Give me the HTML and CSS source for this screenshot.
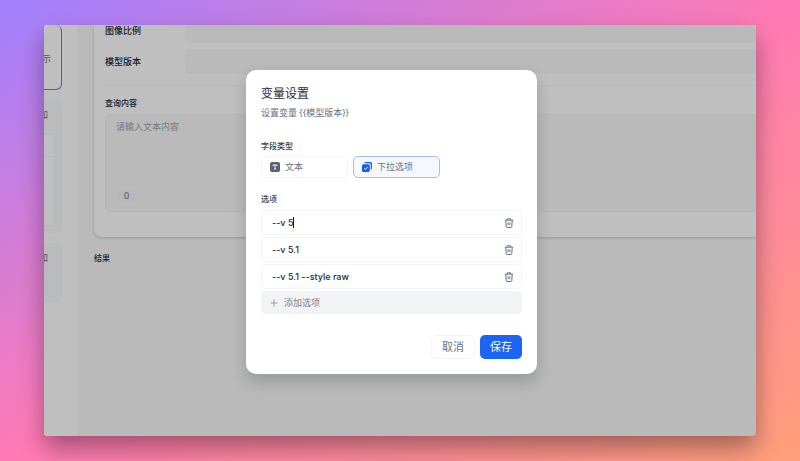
FILE: index.html
```html
<!DOCTYPE html>
<html lang="zh-CN">
<head>
    <meta charset="UTF-8">
    <meta name="viewport" content="width=device-width, initial-scale=1.0">
    <title>变量设置</title>
    <link rel="stylesheet" href="styles.css">
</head>
<body>
    <div class="window">
        <aside class="sidebar">
            <div class="side-card active"><span>示</span></div>
            <div class="side-card variables">
                <span>加</span>
                <div class="side-table">
                    <div class="side-head"></div>
                </div>
            </div>
            <div class="side-card context"><span>加</span></div>
        </aside>

        <main class="main">
            <section class="card">
                <div class="row">
                    <label for="ratio">图像比例</label>
                    <input type="text" id="ratio" class="row-input">
                </div>
                <div class="row">
                    <label for="version">模型版本</label>
                    <input type="text" id="version" class="row-input">
                </div>
                <div class="query">
                    <label for="query">查询内容</label>
                    <div class="query-box">
                        <textarea id="query" placeholder="请输入文本内容"></textarea>
                        <span class="count">0</span>
                    </div>
                </div>
            </section>
            <h2 class="result">结果</h2>
        </main>

        <div class="overlay">
            <form class="modal" role="dialog" aria-labelledby="modalTitle">
                <h1 id="modalTitle">变量设置</h1>
                <p class="desc">设置变量 {{模型版本}}</p>

                <h3>字段类型</h3>
                <div class="types">
                    <button type="button" class="type">
                        <svg width="10" height="10" viewBox="0 0 10 10">
                            <rect width="10" height="10" rx="2" fill="#596275"/>
                            <path d="M3 4V3h4v1M5 3v4M4 7h2" fill="none" stroke="#fff" stroke-width=".9"/>
                        </svg>
                        文本
                    </button>
                    <button type="button" class="type selected">
                        <svg width="10" height="10" viewBox="0 0 10 10">
                            <path d="M3.8 0h4.600A1.600 1.600 0 0 1 10 1.600v4.600a1.600 1.600 0 0 1-1.200 1.500V3.200A2 2 0 0 0 6.800 1.200H2.300A1.600 1.600 0 0 1 3.800 0z" fill="#155eef"/>
                            <rect y="2.200" width="7.800" height="7.800" rx="1.600" fill="#155eef"/>
                            <path d="M2.200 6.200l1.300 1.300 2.300-2.700" fill="none" stroke="#fff" stroke-width=".9"/>
                        </svg>
                        下拉选项
                    </button>
                </div>

                <h3>选项</h3>
                <div class="options">
                    <div class="option">
                        <input type="text" value="--v 5" aria-label="选项 1">
                        <span class="caret"></span>
                        <button type="button" class="delete" aria-label="删除">
                            <svg width="10" height="10" viewBox="0 0 10 10"><path d="M.8 2.200h8.400M3.300 2V.800h3.400V2M1.800 2.400l.4 6.200q.1.900.9.900h3.800q.8 0 .9-.9l.4-6.200M4.100 4.300v2.900M5.900 4.300v2.900"/></svg>
                        </button>
                    </div>
                    <div class="option">
                        <input type="text" value="--v 5.1" aria-label="选项 2">
                        <button type="button" class="delete" aria-label="删除">
                            <svg width="10" height="10" viewBox="0 0 10 10"><path d="M.8 2.200h8.400M3.300 2V.800h3.400V2M1.800 2.400l.4 6.200q.1.900.9.900h3.800q.8 0 .9-.9l.4-6.200M4.100 4.300v2.900M5.900 4.300v2.900"/></svg>
                        </button>
                    </div>
                    <div class="option">
                        <input type="text" value="--v 5.1 --style raw" aria-label="选项 3">
                        <button type="button" class="delete" aria-label="删除">
                            <svg width="10" height="10" viewBox="0 0 10 10"><path d="M.8 2.200h8.400M3.300 2V.800h3.400V2M1.800 2.400l.4 6.200q.1.900.9.900h3.800q.8 0 .9-.9l.4-6.200M4.100 4.300v2.900M5.900 4.300v2.900"/></svg>
                        </button>
                    </div>
                    <button type="button" class="add">
                        <svg width="8" height="8" viewBox="0 0 8 8"><path d="M4 .5v7M.5 4h7"/></svg>
                        添加选项
                    </button>
                </div>

                <div class="actions">
                    <button type="button" class="cancel">取消</button>
                    <button type="submit" class="save">保存</button>
                </div>
            </form>
        </div>
    </div>
</body>
</html>
```

FILE: styles.css
```css
* {
    box-sizing: border-box;
}

body {
    margin: 0;
    min-height: 100vh;
    padding: 25px 44px;
    display: flex;
    overflow-x: hidden;
    font-family: "Noto Sans", "Noto Sans CJK SC", sans-serif;
    font-size: 9px;
    line-height: 12px;
    color: #1f2a37;
    background: linear-gradient(to bottom right, #a080ff, #ff7ab5 50%, #ffa07a);
}

h1, h2, h3, p {
    margin: 0;
}

button, input, textarea {
    font: inherit;
    color: inherit;
    margin: 0;
    border: none;
    outline: none;
}

button {
    cursor: pointer;
}

.window {
    position: relative;
    flex: 1;
    display: flex;
    overflow: hidden;
    border-radius: 4px;
    background: #f9f9f9;
    box-shadow: 0 12px 24px rgba(0, 0, 0, 0.36);
}

/* sidebar */
.sidebar {
    width: 34px;
    padding-right: 15px;
    background: #fff;
    border-right: 1px solid #f9f9fa;
}

.side-card {
    overflow: hidden;
    margin-bottom: 10px;
    background: #f9fafb;
    border-radius: 0 6px 6px 0;
    color: #6b7280;
}

.side-card span {
    display: flex;
    justify-content: flex-end;
    width: 4px;
}

.side-card.active {
    height: 65px;
    padding-top: 28px;
    background: #fff;
    border: 1px solid #7477e0;
    border-top: none;
    border-left: none;
}

.side-card.active span {
    width: 7px;
}

.variables {
    height: 133px;
    padding-top: 9px;
}

.side-table {
    height: 92px;
    margin: 13px 7px 0 0;
    background: #fff;
    border: 1px solid #f3f4f6;
    border-left: none;
    border-radius: 0 4px 4px 0;
}

.side-head {
    height: 22px;
    border-bottom: 1px solid #f3f4f6;
}

.context {
    height: 59px;
    padding-top: 9px;
}

/* main area */
.main {
    flex: 1;
    min-width: 0;
    padding-left: 16px;
}

.card {
    height: 212px;
    padding-left: 11px;
    background: #fff;
    border-radius: 0 0 0 7px;
    box-shadow: 0 1px 3px rgba(16, 24, 40, 0.2);
}

.row {
    display: flex;
    align-items: center;
    height: 25px;
    margin-bottom: 6px;
}

.row:first-child {
    height: 18px;
}

.row label {
    width: 80px;
    font-weight: 500;
}

.row:first-child label {
    padding-bottom: 7px;
}

.row-input {
    flex: 1;
    height: 100%;
    background: #f9f9f9;
    border-radius: 5px 0 0 5px;
}

.row:first-child .row-input {
    border-top-left-radius: 0;
}

.query {
    margin-top: 11px;
    padding-top: 11px;
    border-top: 1px solid #f9f9f9;
}

.query label {
    display: block;
    margin-bottom: 5px;
    font-size: 8px;
    font-weight: 500;
}

.query-box {
    display: flex;
    flex-direction: column;
    align-items: flex-start;
    height: 98px;
    padding: 6px 10px 9px;
    background: #f9f9f9;
    border: 1px solid #f3f3f3;
    border-right: none;
    border-radius: 5px 0 0 5px;
}

textarea {
    flex: 1;
    width: 100%;
    padding: 0;
    resize: none;
    background: none;
}

textarea::placeholder {
    color: #9ca3af;
    opacity: 1;
}

.count {
    margin-left: 2px;
    padding: 0 6px;
    background: #f3f4f6;
    border-radius: 3px;
    color: #6b7280;
}

.result {
    margin-top: 15px;
    font-size: 8px;
    font-weight: 500;
}

/* dialog */
.overlay {
    position: absolute;
    inset: 0;
    display: flex;
    align-items: center;
    justify-content: center;
    padding: 0 17px 17px 0;
    background: rgba(0, 0, 0, 0.25);
}

.modal {
    width: 291px;
    padding: 15px;
    background: #fff;
    border-radius: 10px;
    box-shadow: 0 8px 16px rgba(16, 24, 40, 0.2);
}

.modal h1 {
    font-size: 12px;
    line-height: 18px;
    font-weight: 400;
}

.desc {
    margin-top: 4px;
    color: #6b7280;
}

.modal h3 {
    margin: 21px 0 4px;
    font-size: 8px;
    font-weight: 500;
    color: #374151;
}

.types {
    display: flex;
    gap: 5px;
}

.type {
    display: flex;
    align-items: center;
    gap: 5px;
    width: 87px;
    height: 22px;
    padding: 0 8px;
    background: #fff;
    border: 1px solid #f3f4f8;
    border-radius: 5px;
    color: #6b7280;
}

.type.selected {
    background: #f5f8ff;
    border-color: #a4bcfd;
}

.types + h3 {
    margin-top: 15px;
    margin-bottom: 5px;
}

.options {
    display: flex;
    flex-direction: column;
    gap: 2px;
}

.option {
    position: relative;
    display: flex;
    align-items: center;
    height: 25px;
    padding: 0 7px 0 10px;
    border: 1px solid #f3f4f6;
    border-radius: 5px;
}

.option input {
    flex: 1;
    min-width: 0;
    padding: 0;
    font-family: Inter, "Noto Sans CJK SC", sans-serif;
    font-weight: 500;
    background: none;
}

.caret {
    position: absolute;
    left: 31px;
    width: 1px;
    height: 11px;
    background: #111827;
}

.delete {
    display: flex;
    padding: 0;
    background: none;
}

.delete svg {
    fill: none;
    stroke: #667085;
    stroke-width: 1;
}

.add {
    display: flex;
    align-items: center;
    gap: 6px;
    height: 23px;
    padding: 0 9px;
    background: #f2f3f5;
    border-radius: 5px;
    color: #7b8494;
}

.add svg {
    fill: none;
    stroke: #9299a6;
    stroke-width: 1;
}

.actions {
    display: flex;
    justify-content: flex-end;
    gap: 5px;
    margin-top: 21px;
}

.actions button {
    height: 24px;
    padding: 0 10px;
    font-size: 11px;
    border-radius: 5px;
}

.actions .cancel {
    background: #fff;
    border: 1px solid #f3f4f6;
    color: #6b7280;
}

.actions .save {
    background: #1c64f2;
    color: #fff;
}
```
